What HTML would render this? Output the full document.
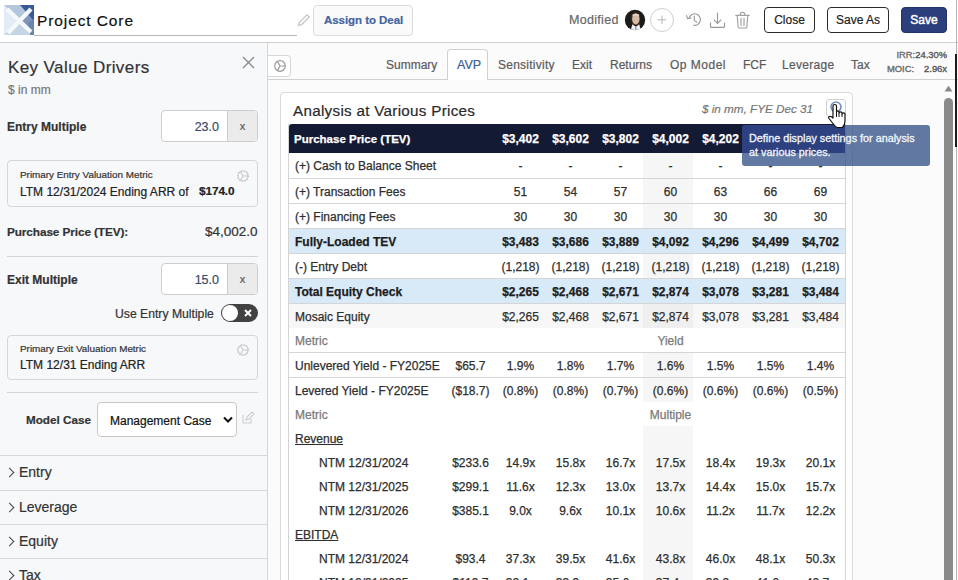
<!DOCTYPE html>
<html><head><meta charset="utf-8">
<style>
*{box-sizing:border-box;margin:0;padding:0}
html,body{width:958px;height:580px;overflow:hidden;background:#fff;font-family:"Liberation Sans",sans-serif;color:#333;font-size:12px;-webkit-text-stroke:0.2px currentColor}
.a{position:absolute;white-space:nowrap;line-height:1}
#hdr{position:absolute;left:0;top:0;width:958px;height:43px;background:#fff;border-bottom:1px solid #d0d0d0}
.btn{position:absolute;border:1px solid #2b2b2b;border-radius:3px;background:#fff;color:#222;font-size:12px;line-height:23px;text-align:center}
#left{position:absolute;left:0;top:43px;width:268px;height:537px;background:#f7f8fa;border-right:1px solid #d6d6d6}
#main{position:absolute;left:268px;top:43px;width:690px;height:537px;background:#fbfbfb}
.lbl{font-weight:bold;color:#333}
.inp{position:absolute;background:#fff;border:1px solid #cdcdcd;border-radius:4px}
.addon{position:absolute;background:#ebebeb;border-left:1px solid #cdcdcd;top:0;bottom:0;right:0;border-radius:0 3px 3px 0;color:#5a5a5a;text-align:center;font-size:11px}
.mbox{position:absolute;left:7px;width:251px;border:1px solid #d6d6d6;border-radius:4px;background:#f6f8fa}
.sep{position:absolute;left:7px;width:251px;height:1px;background:#d3d3d3}
.accl{position:absolute;left:0;width:267px;height:1px;background:#d8d8d8}
.acct{position:absolute;left:19px;font-size:14px;color:#333}
.chev{position:absolute;left:6px;width:7px;height:7px;border-right:1.2px solid #444;border-top:1.2px solid #444;transform:rotate(45deg)}
.tab{position:absolute;top:59px;font-size:12px;color:#5a5a5a;line-height:1;white-space:nowrap}
#card{position:absolute;left:280px;top:92px;width:573px;height:520px;background:#fff;border:1px solid #dadada;border-radius:4px}
#tbl{position:absolute;left:288px;top:124px;border-left:1px solid #d5d5d5;border-collapse:collapse;font-size:12px;color:#2e2e2e;table-layout:fixed;-webkit-text-stroke:0.25px currentColor}
#tbl td{padding:2px 0 0 0;text-align:center;white-space:nowrap;border-left:0;border-right:0}
#tbl tr{height:25px}
#tbl tr.b td{border-bottom:1px solid #d5d5d5}
#tbl tr.h td{background:#131a33;color:#fff;font-weight:bold;height:29px;padding:0}
#tbl tr.h td.l{font-size:11.5px;border-radius:3px 0 0 0;padding-left:5px}
#tbl tr.bl td{background:#d8e9f8;font-weight:bold;color:#1d1d1d}
#tbl tr.s{height:24px}
#tbl td.l{text-align:left;padding-left:6px}
#tbl tr.g td{color:#7a7a7a}
#tbl td.ind{padding-left:30px}
#tbl td.u{text-decoration:underline}
#tbl td.hl{background:linear-gradient(90deg,#f6f6f6 47px,transparent 47px)}
#tbl td.pl{background:linear-gradient(90deg,transparent 47px,#f6f6f6 47px)}
#tbl tr.mo td{background:#f7f7f7}
#tbl tr.mo td.hl{background:linear-gradient(90deg,#efefef 47px,#f7f7f7 47px)}
#tbl tr.mo td.pl{background:linear-gradient(90deg,#f7f7f7 47px,#efefef 47px)}
</style></head><body>
<div id="hdr">
  <svg class="a" style="left:4px;top:5px" width="30" height="30" viewBox="0 0 30 30">
    <polygon points="0,0 0,30 15,15" fill="#e2ecf6"/>
    <polygon points="0,0 30,0 15,15" fill="#b3c6dc"/>
    <polygon points="30,0 30,30 15,15" fill="#7d95ba"/>
    <polygon points="0,30 30,30 15,15" fill="#c5d5e6"/>
    <polygon points="16,0 30,0 30,16" fill="#3a5a96"/>
    <polygon points="24,18 30,14 30,30 26,30" fill="#6a84ad"/>
    <path d="M3 4 L27 27 M27 4 L4 28" stroke="#f5f9fd" stroke-width="4.2"/>
  </svg>
  <div class="a" style="left:37px;top:13px;font-size:15.5px;letter-spacing:0.9px;color:#111">Project Core</div>
  <div class="a" style="left:34px;top:35px;width:263px;height:1px;background:#b8b8b8"></div>
  <svg class="a" style="left:297px;top:13px" width="14" height="14" viewBox="0 0 14 14"><path d="M1.5 12.5 L2.3 9.5 L10 1.8 L12.2 4 L4.5 11.7 Z" fill="none" stroke="#c4c4c4" stroke-width="1.2"/></svg>
  <div class="a" style="left:313px;top:5px;width:100px;height:31px;border:1px solid #dcdcdc;border-radius:4px;background:#fafafa"></div>
  <div class="a" style="left:324px;top:15px;font-weight:bold;color:#4265a0;font-size:11.5px;letter-spacing:-0.05px">Assign to Deal</div>
  <div class="a" style="left:569px;top:14px;color:#666;font-size:12.5px;letter-spacing:0.3px">Modified</div>
  <svg class="a" style="left:624px;top:9px" width="22" height="22" viewBox="0 0 22 22">
    <defs><clipPath id="cc"><circle cx="11" cy="11" r="10.2"/></clipPath></defs>
    <g clip-path="url(#cc)">
      <rect width="22" height="22" fill="#1d1b1a"/>
      <path d="M7.2 9 Q7 3.2 11.8 3.4 Q16.4 3.6 16 9 L15.6 16 H8 Z" fill="#4a2e20"/>
      <ellipse cx="11.8" cy="10" rx="3.7" ry="5.4" fill="#d3bca8"/>
      <path d="M8.5 5.8 Q11.8 3.6 15.2 5.8 L15 7 Q11.8 5.4 8.6 7 Z" fill="#e6dcd2"/>
      <path d="M6.5 22 L8.3 15.5 L11.8 17.5 L15.3 15.5 L17 22 Z" fill="#f2f2f4"/>
      <path d="M11 17 L12.6 17 L12.3 22 L11.3 22 Z" fill="#8a97b0"/>
    </g>
  </svg>
  <div class="a" style="left:650px;top:8px;width:24px;height:24px;border-radius:50%;border:1px solid #cfcfcf"></div>
  <svg class="a" style="left:657px;top:15px" width="10" height="10" viewBox="0 0 10 10" stroke="#b5b5b5" stroke-width="1"><path d="M5 0.5 V9 M0.8 4.8 H9.2"/></svg>
  <svg class="a" style="left:683px;top:9px" width="20" height="20" viewBox="0 0 20 20" fill="none" stroke="#9a9a9a" stroke-width="1.15" stroke-linecap="round" stroke-linejoin="round"><path d="M6.15 8.6 A5.8 5.8 0 1 1 10.6 16.3"/><path d="M3.6 6.6 L4.6 9.8 L7.9 8.9"/><path d="M11.3 7 V11.4 L13.9 13.4"/></svg>
  <svg class="a" style="left:709px;top:10px" width="18" height="20" viewBox="0 0 18 20" fill="none" stroke="#9a9a9a" stroke-width="1.15" stroke-linecap="round" stroke-linejoin="round"><path d="M8.5 3 V13.3"/><path d="M5 9.8 L8.5 13.3 L12 9.8"/><path d="M1.5 13 V16.4 Q1.5 17.4 2.5 17.4 H14.5 Q15.5 17.4 15.5 16.4 V13"/></svg>
  <svg class="a" style="left:734px;top:10px" width="17" height="20" viewBox="0 0 17 20" fill="none" stroke="#a2a2a2" stroke-width="1.15" stroke-linecap="round" stroke-linejoin="round"><path d="M6.3 5 V3.6 Q6.3 2.4 8.5 2.4 Q10.7 2.4 10.7 3.6 V5"/><path d="M1.8 5.4 H15.2"/><path d="M3.2 5.8 L4.2 17.2 Q4.3 18 5.1 18 H11.9 Q12.7 18 12.8 17.2 L13.8 5.8"/><path d="M7 8.3 V15.5 M10 8.3 V15.5"/></svg>
  <div class="btn" style="left:764px;top:7px;width:51px;height:26px;line-height:24px;border-width:1.3px;border-radius:4px">Close</div>
  <div class="btn" style="left:827px;top:7px;width:62px;height:26px;line-height:24px;border-width:1.3px;border-radius:4px">Save As</div>
  <div class="btn" style="left:901px;top:7px;width:46px;height:26px;line-height:24px;border-radius:4px;background:#2c3e7c;border-color:#243468;color:#fff;font-size:12px;-webkit-text-stroke:0.45px #fff">Save</div>
</div>

<div id="main">
  <div class="a" style="left:0;top:36px;width:690px;height:1px;background:#d0d0d0"></div>
</div>
<!-- tabs -->
<div class="a" style="left:447px;top:49px;width:41px;height:31px;background:#fff;border:1px solid #d0d0d0;border-bottom:none;border-radius:4px 4px 0 0"></div>
<div class="tab" style="left:386px">Summary</div>
<div class="tab" style="left:457px;color:#3b5d96;font-size:12.5px">AVP</div>
<div class="tab" style="left:498px;letter-spacing:0.25px">Sensitivity</div>
<div class="tab" style="left:572px">Exit</div>
<div class="tab" style="left:610px">Returns</div>
<div class="tab" style="left:670px;letter-spacing:0.5px">Op Model</div>
<div class="tab" style="left:743px">FCF</div>
<div class="tab" style="left:782px;letter-spacing:0.3px">Leverage</div>
<div class="tab" style="left:851px">Tax</div>
<div class="a" style="right:11px;top:50px;font-size:9.4px;color:#6a6a6a;-webkit-text-stroke:0.35px currentColor">IRR:<span style="color:#555">24.30%</span></div>
<div class="a" style="left:887px;top:64px;font-size:9.4px;color:#6a6a6a;-webkit-text-stroke:0.35px currentColor">MOIC:</div>
<div class="a" style="right:11px;top:64px;font-size:9.4px;color:#555;-webkit-text-stroke:0.35px currentColor">2.96x</div>

<div class="a" style="left:267px;top:55px;width:24px;height:22px;background:#fff;border:1px solid #d6d6d6;border-left:none;border-radius:0 4px 4px 0"></div>
<svg class="a" style="left:273px;top:59px" width="14" height="14" viewBox="0 0 14 14" fill="none" stroke="#999" stroke-width="1.2"><circle cx="7" cy="7" r="5.3"/><path d="M7 7 L12.3 7 M7 7 L4.4 2.4 M7 7 L4.4 11.6"/></svg>

<div id="left">
  <div class="a" style="left:8px;top:16px;font-size:17px;letter-spacing:0.4px;color:#333">Key Value Drivers</div>
  <svg class="a" style="left:242px;top:13px" width="13" height="13" viewBox="0 0 13 13" stroke="#888" stroke-width="1.3"><path d="M1 1 L12 12 M12 1 L1 12"/></svg>
  <div class="a" style="left:8px;top:41px;font-size:12px;color:#777">$ in mm</div>
  <div class="a lbl" style="left:7px;top:78px">Entry Multiple</div>
  <div class="inp" style="left:161px;top:67px;width:97px;height:32px"><div class="a" style="right:38px;top:10px;color:#3c4a6a;font-size:12.5px">23.0</div><div class="addon" style="width:30px;line-height:31px">x</div></div>
  <div class="mbox" style="top:117px;height:47px"></div>
  <div class="a" style="left:20px;top:127px;font-size:9.9px;color:#333">Primary Entry Valuation Metric</div>
  <div class="a" style="left:20px;top:143px;font-size:12px;color:#222">LTM 12/31/2024 Ending ARR of</div>
  <div class="a" style="left:199px;top:143px;font-size:11.8px;font-weight:bold;color:#222;letter-spacing:-0.1px">$174.0</div>
  <svg class="a" style="left:236px;top:126px" width="14" height="14" viewBox="0 0 14 14" fill="none" stroke="#c6cbd1" stroke-width="1.1"><circle cx="7" cy="7" r="5"/><circle cx="7" cy="7" r="5.6" stroke-dasharray="0.9 2.03" stroke-width="1.2"/><path d="M7 7 L12 7 M7 7 L4.5 2.7 M7 7 L4.5 11.3"/></svg>
  <div class="a lbl" style="left:7px;top:184px;font-size:11.8px;letter-spacing:-0.1px">Purchase Price (TEV):</div>
  <div class="a" style="left:205px;top:182px;font-size:13.5px;color:#333">$4,002.0</div>
  <div class="sep" style="top:213px"></div>
  <div class="a lbl" style="left:7px;top:231px">Exit Multiple</div>
  <div class="inp" style="left:161px;top:220px;width:97px;height:32px"><div class="a" style="right:38px;top:10px;color:#3c4a6a;font-size:12.5px">15.0</div><div class="addon" style="width:30px;line-height:31px">x</div></div>
  <div class="a" style="left:115px;top:265px;font-size:12.2px;color:#333">Use Entry Multiple</div>
  <div class="a" style="left:221px;top:261px;width:37px;height:18px;border-radius:9px;background:#424242"></div>
  <div class="a" style="left:222px;top:262px;width:16px;height:16px;border-radius:50%;background:#fff"></div>
  <svg class="a" style="left:243px;top:265px" width="10" height="10" viewBox="0 0 10 10" stroke="#fff" stroke-width="2"><path d="M2 2 L8 8 M8 2 L2 8"/></svg>
  <div class="mbox" style="top:292px;height:45px"></div>
  <div class="a" style="left:20px;top:301px;font-size:9.9px;color:#333">Primary Exit Valuation Metric</div>
  <div class="a" style="left:20px;top:316px;font-size:12px;color:#222">LTM 12/31 Ending ARR</div>
  <svg class="a" style="left:236px;top:300px" width="14" height="14" viewBox="0 0 14 14" fill="none" stroke="#c6cbd1" stroke-width="1.1"><circle cx="7" cy="7" r="5"/><circle cx="7" cy="7" r="5.6" stroke-dasharray="0.9 2.03" stroke-width="1.2"/><path d="M7 7 L12 7 M7 7 L4.5 2.7 M7 7 L4.5 11.3"/></svg>
  <div class="sep" style="top:349px"></div>
  <div class="a lbl" style="left:26px;top:371px;font-size:11.7px">Model Case</div>
  <div class="a" style="left:97px;top:359px;width:140px;height:35px;background:#fff;border:1px solid #c8c8c8;border-radius:4px"></div>
  <div class="a" style="left:110px;top:372px;font-size:12px;color:#111">Management Case</div>
  <svg class="a" style="left:223px;top:373px" width="10" height="8" viewBox="0 0 10 8" fill="none" stroke="#111" stroke-width="2"><path d="M1 1.5 L5 5.5 L9 1.5"/></svg>
  <svg class="a" style="left:241px;top:368px" width="14" height="14" viewBox="0 0 14 14" fill="none" stroke="#cfcfcf" stroke-width="1.2"><path d="M2 4 V12 H10 V8"/><path d="M5 9 L6 6 L11 1 L13 3 L8 8 Z"/></svg>
  <div class="accl" style="top:412px"></div>
  <div class="chev" style="top:426px"></div><div class="acct" style="top:421px">Entry</div>
  <div class="accl" style="top:447px"></div>
  <div class="chev" style="top:461px"></div><div class="acct" style="top:456px">Leverage</div>
  <div class="accl" style="top:481px"></div>
  <div class="chev" style="top:495px"></div><div class="acct" style="top:490px">Equity</div>
  <div class="accl" style="top:515px"></div>
  <div class="chev" style="top:529px"></div><div class="acct" style="top:524px">Tax</div>
</div>

<div id="card"></div>
<div class="a" style="left:293px;top:103px;font-size:15.2px;color:#2a2a2a;letter-spacing:0.3px">Analysis at Various Prices</div>
<div class="a" style="left:702px;top:103px;font-size:11.7px;color:#777;font-style:italic;letter-spacing:0px">$ in mm, FYE Dec 31</div>
<div class="a" style="left:826px;top:99px;width:20px;height:18px;border:1px solid #cfcfcf;border-radius:3px;background:#fff"></div>
<svg class="a" style="left:829px;top:100px" width="14" height="14" viewBox="0 0 14 14" fill="none" stroke="#6f8fbf" stroke-width="1.6"><circle cx="7" cy="7" r="5"/></svg>

<table id="tbl">
<colgroup><col style="width:157px"><col style="width:50px"><col style="width:50px"><col style="width:50px"><col style="width:50px"><col style="width:50px"><col style="width:50px"><col style="width:50px"><col style="width:50px"></colgroup>
<tr class="h"><td class="l">Purchase Price (TEV)</td><td></td><td>$3,402</td><td>$3,602</td><td>$3,802</td><td>$4,002</td><td>$4,202</td><td></td><td></td></tr>
<tr class="b"><td class="l">(+) Cash to Balance Sheet</td><td></td><td>-</td><td>-</td><td class="pl">-</td><td class="hl">-</td><td>-</td><td>-</td><td>-</td></tr>
<tr class="b"><td class="l">(+) Transaction Fees</td><td></td><td>51</td><td>54</td><td class="pl">57</td><td class="hl">60</td><td>63</td><td>66</td><td>69</td></tr>
<tr class="b"><td class="l">(+) Financing Fees</td><td></td><td>30</td><td>30</td><td class="pl">30</td><td class="hl">30</td><td>30</td><td>30</td><td>30</td></tr>
<tr class="b bl"><td class="l">Fully-Loaded TEV</td><td></td><td>$3,483</td><td>$3,686</td><td>$3,889</td><td>$4,092</td><td>$4,296</td><td>$4,499</td><td>$4,702</td></tr>
<tr class="b"><td class="l">(-) Entry Debt</td><td></td><td>(1,218)</td><td>(1,218)</td><td class="pl">(1,218)</td><td class="hl">(1,218)</td><td>(1,218)</td><td>(1,218)</td><td>(1,218)</td></tr>
<tr class="b bl"><td class="l">Total Equity Check</td><td></td><td>$2,265</td><td>$2,468</td><td>$2,671</td><td>$2,874</td><td>$3,078</td><td>$3,281</td><td>$3,484</td></tr>
<tr class="mo"><td class="l">Mosaic Equity</td><td></td><td>$2,265</td><td>$2,468</td><td class="pl">$2,671</td><td class="hl">$2,874</td><td>$3,078</td><td>$3,281</td><td>$3,484</td></tr>
<tr class="b g s"><td class="l">Metric</td><td></td><td></td><td></td><td></td><td>Yield</td><td></td><td></td><td></td></tr>
<tr class="b"><td class="l">Unlevered Yield - FY2025E</td><td>$65.7</td><td>1.9%</td><td>1.8%</td><td class="pl">1.7%</td><td class="hl">1.6%</td><td>1.5%</td><td>1.5%</td><td>1.4%</td></tr>
<tr><td class="l">Levered Yield - FY2025E</td><td>($18.7)</td><td>(0.8%)</td><td>(0.8%)</td><td class="pl">(0.7%)</td><td class="hl">(0.6%)</td><td>(0.6%)</td><td>(0.6%)</td><td>(0.5%)</td></tr>
<tr class="s g"><td class="l">Metric</td><td></td><td></td><td></td><td></td><td>Multiple</td><td></td><td></td><td></td></tr>
<tr class="s"><td class="l u">Revenue</td><td></td><td></td><td></td><td class="pl"></td><td class="hl"></td><td></td><td></td><td></td></tr>
<tr class="s"><td class="l ind">NTM 12/31/2024</td><td>$233.6</td><td>14.9x</td><td>15.8x</td><td class="pl">16.7x</td><td class="hl">17.5x</td><td>18.4x</td><td>19.3x</td><td>20.1x</td></tr>
<tr class="s"><td class="l ind">NTM 12/31/2025</td><td>$299.1</td><td>11.6x</td><td>12.3x</td><td class="pl">13.0x</td><td class="hl">13.7x</td><td>14.4x</td><td>15.0x</td><td>15.7x</td></tr>
<tr class="s"><td class="l ind">NTM 12/31/2026</td><td>$385.1</td><td>9.0x</td><td>9.6x</td><td class="pl">10.1x</td><td class="hl">10.6x</td><td>11.2x</td><td>11.7x</td><td>12.2x</td></tr>
<tr class="s"><td class="l u">EBITDA</td><td></td><td></td><td></td><td class="pl"></td><td class="hl"></td><td></td><td></td><td></td></tr>
<tr class="s"><td class="l ind">NTM 12/31/2024</td><td>$93.4</td><td>37.3x</td><td>39.5x</td><td class="pl">41.6x</td><td class="hl">43.8x</td><td>46.0x</td><td>48.1x</td><td>50.3x</td></tr>
<tr class="s"><td class="l ind">NTM 12/31/2025</td><td>$119.7</td><td>32.1x</td><td>33.9x</td><td class="pl">35.6x</td><td class="hl">37.4x</td><td>39.2x</td><td>41.0x</td><td>42.7x</td></tr>
</table>
<div class="a" style="left:845px;top:124px;width:0;height:460px;border-left:1px solid #d5d5d5"></div>

<!-- tooltip -->
<div class="a" style="left:742px;top:125px;width:188px;height:41px;background:rgba(54,83,137,0.78);border-radius:3px"></div>
<div class="a" style="left:742px;top:125px;width:103px;height:28px;background:#2d4180;border-radius:3px 0 0 0"></div>
<div class="a" style="left:749px;top:132px;font-size:10.8px;color:#f2f5fa;line-height:13.5px;-webkit-text-stroke:0.3px #f2f5fa">Define display settings for analysis<br>at various prices.</div>
<svg class="a" style="left:828px;top:103px" width="20" height="26" viewBox="0 0 20 26"><path d="M5 15 V3 Q5 1.5 6.75 1.5 Q8.5 1.5 8.5 3 V9 Q8.5 7.8 9.75 7.8 Q11 7.8 11 9 V10 Q11 8.8 12.5 8.8 Q14 8.8 14 10 V11 Q14 9.8 15.5 9.8 Q17 9.8 17 11 V18 Q17 22 14.5 24.5 H9 Q7 23.5 5 20.5 L1 15.5 Q0 14 1.5 13.5 Q3 13 5 15 Z" fill="#fff" stroke="#111" stroke-width="1.2" stroke-linejoin="round"/><path d="M8.5 9 V14 M11 10 V14 M14 11 V14" stroke="#111" stroke-width="1"/></svg>
<!-- scrollbar -->
<svg class="a" style="left:944px;top:85px" width="9" height="7" viewBox="0 0 9 7"><path d="M0.5 6.5 L4.5 0.8 L8.5 6.5 Z" fill="#888"/></svg>
<div class="a" style="left:944px;top:98px;width:9px;height:482px;background:#8a8a8a;border-radius:4.5px 4.5px 0 0"></div>
<div class="a" style="left:956px;top:0;width:1px;height:580px;background:#b4b4b4"></div>
<div class="a" style="left:955px;top:54px;width:2px;height:93px;background:#1a1a1a"></div>
</body></html>
